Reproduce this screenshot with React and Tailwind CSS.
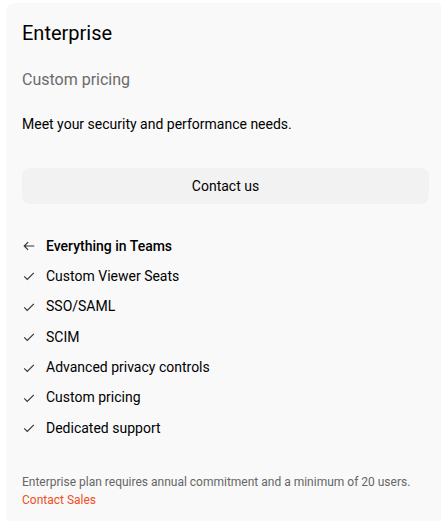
import React from 'react'

const features = [
  'Custom Viewer Seats',
  'SSO/SAML',
  'SCIM',
  'Advanced privacy controls',
  'Custom pricing',
  'Dedicated support',
]

const Check = () => (
  <svg width="14" height="14" viewBox="0 0 16 16" fill="none" stroke="#333" strokeWidth="1.3">
    <path d="M2.5 8.5l3.5 3.5 7.5-7.5" />
  </svg>
)

const ArrowLeft = () => (
  <svg width="14" height="14" viewBox="0 0 16 16" fill="none" stroke="#333" strokeWidth="1.3">
    <path d="M14 8H2.5M7 3.5L2.5 8 7 12.5" />
  </svg>
)

export default function App() {
  return (
    <div className="w-[441px] h-[521px] overflow-hidden bg-white" style={{ fontFamily: 'Roboto, sans-serif' }}>
      <div className="ml-[6px] mt-[3px] w-[439px] h-[540px] rounded-lg bg-[#f9f9f9] px-4 pt-[16px]">
        <h2 className="text-[20px] leading-7 text-black">Enterprise</h2>
        <p className="mt-[21px] text-[16px] leading-6 text-[#6b6b6b]">Custom pricing</p>
        <p className="mt-[22px] text-[14px] leading-5 text-black">Meet your security and performance needs.</p>
        <button className="mt-[34px] w-full h-9 rounded-lg bg-[#f2f2f2] text-[14px] text-black">
          Contact us
        </button>
        <ul className="mt-[32px] flex flex-col">
          <li className="flex items-center gap-[10px] h-5 text-[14px] font-medium text-black">
            <ArrowLeft />
            Everything in Teams
          </li>
          {features.map((f) => (
            <li key={f} className="flex items-center gap-[10px] h-5 mt-[10.4px] text-[14px] text-black">
              <Check />
              {f}
            </li>
          ))}
        </ul>
        <p className="mt-[35px] text-[12px] leading-[18px] text-[#666]">
          Enterprise plan requires annual commitment and a minimum of 20 users.
        </p>
        <a className="block text-[12px] leading-[18px] text-[#f24e1e]" href="#">Contact Sales</a>
      </div>
    </div>
  )
}
